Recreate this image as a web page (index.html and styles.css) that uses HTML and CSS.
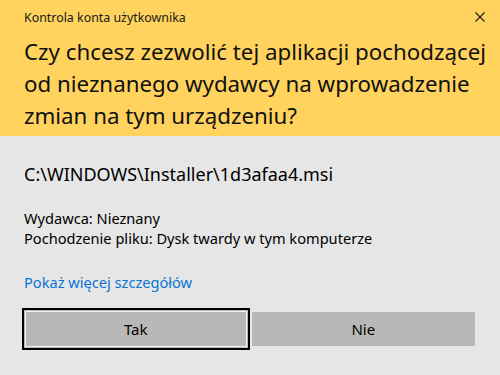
FILE: index.html
```html
<!DOCTYPE html>
<html lang="pl">
<head>
  <meta charset="UTF-8">
  <title>Kontrola konta użytkownika</title>
  <link rel="stylesheet" href="styles.css">
</head>
<body>

  <!-- Yellow banner -->
  <header class="banner">
    <div class="banner-top">
      <span class="caption">Kontrola konta użytkownika</span>
      <svg class="close" width="10" height="10" viewBox="0 0 10 10">
        <path d="M0.5 0.5 L9.5 9.5 M9.5 0.5 L0.5 9.5" stroke="#1a1a1a" stroke-width="1.1" fill="none"/>
      </svg>
    </div>
    <h1 class="question">Czy chcesz zezwolić tej aplikacji pochodzącej<br>od nieznanego wydawcy na wprowadzenie<br>zmian na tym urządzeniu?</h1>
  </header>

  <!-- Details -->
  <section class="details">
    <p class="program">C:\WINDOWS\Installer\1d3afaa4.msi</p>
    <p class="info">Wydawca: Nieznany<br>Pochodzenie pliku: Dysk twardy w tym komputerze</p>
    <a class="more" href="#">Pokaż więcej szczegółów</a>
  </section>

  <!-- Buttons -->
  <div class="actions">
    <button class="btn btn-focus">Tak</button>
    <button class="btn">Nie</button>
  </div>

</body>
</html>
```

FILE: styles.css
```css
body {
  margin: 0;
  width: 500px;
  height: 375px;
  background: #e6e6e6;
  font-family: 'Noto Sans', 'Open Sans', sans-serif;
  color: #000;
  overflow: hidden;
}

/* Banner */
.banner {
  background: #ffd35e;
  height: 136px;
  padding: 0 15px 0 24px;
  box-sizing: border-box;
}

.banner-top {
  display: flex;
  justify-content: space-between;
  align-items: center;
  padding-top: 7px;
  height: 20px;
}

.caption {
  font-size: 12.4px;
  color: #1a1a1a;
}

.close {
  display: block;
}

.question {
  margin: 9px 0 0;
  font-size: 22.3px;
  font-weight: normal;
  line-height: 32px;
  color: #111;
  white-space: nowrap;
}

/* Details */
.details {
  padding: 26px 24px 0;
}

.program {
  margin: 0;
  font-size: 18px;
  line-height: 24px;
}

.info {
  margin: 22px 0 0;
  font-size: 14.6px;
  line-height: 20px;
}

.more {
  display: inline-block;
  margin-top: 24px;
  font-size: 14.6px;
  line-height: 20px;
  color: #0a74d5;
  text-decoration: none;
}

/* Buttons */
.actions {
  display: flex;
  align-items: center;
  gap: 2px;
  margin: 15px 25px 0 22px;
}

.btn {
  flex: 1;
  height: 34px;
  border: none;
  background: #b8b8b8;
  font-family: inherit;
  font-size: 15px;
  color: #000;
  padding: 0;
}

.btn-focus {
  height: 42px;
  border: 2px solid #000;
  box-shadow: inset 0 0 0 1px #b8b8b8, inset 0 0 0 2px #f2f2f2;
}
```
